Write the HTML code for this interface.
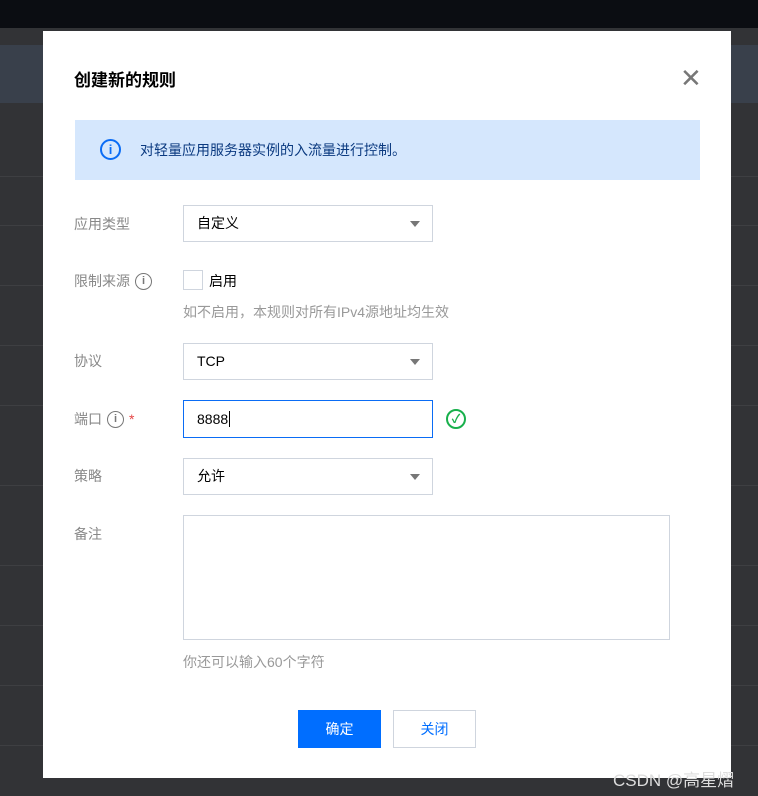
<!DOCTYPE html><html><head><meta charset="utf-8"><style>
*{margin:0;padding:0;box-sizing:border-box}
body{width:758px;height:796px;background:#323336;position:relative;overflow:hidden;font-family:"Liberation Sans","Noto Sans CJK SC",sans-serif;font-size:14px;color:#000}
.top{position:absolute;left:0;top:0;width:758px;height:28px;background:#0b0d12}
.strip{position:absolute;left:0;top:45px;width:758px;height:58px;background:#39404b}
.hl{position:absolute;left:0;width:758px;height:1px;background:#3e3f42}
.m{position:absolute;left:43px;top:31px;width:688px;height:747px;background:#fff}
.a{position:absolute}
.lbl{position:absolute;left:31px;color:#888;font-size:14px;display:flex;align-items:center;height:20px}
.sel{position:absolute;left:140px;width:250px;height:37px;border:1px solid #cfd5de;padding-left:13px;line-height:35px;color:#000}
.sel:after{content:"";position:absolute;right:12px;top:15px;border-left:5px solid transparent;border-right:5px solid transparent;border-top:6px solid #777}
.ic{display:inline-block;width:17px;height:17px;border:1.6px solid #777;border-radius:50%;color:#777;font-size:11px;font-weight:bold;text-align:center;line-height:14px;margin-left:5px}
</style></head><body>
<div class="top"></div><div class="strip"></div>
<div class="hl" style="top:176px"></div><div class="hl" style="top:225px"></div><div class="hl" style="top:285px"></div><div class="hl" style="top:345px"></div><div class="hl" style="top:405px"></div><div class="hl" style="top:485px"></div><div class="hl" style="top:565px"></div><div class="hl" style="top:625px"></div><div class="hl" style="top:685px"></div><div class="hl" style="top:745px"></div>
<div class="m">
<div class="a" style="left:31px;top:35px;font-size:17px;font-weight:bold;color:#000">创建新的规则</div>
<div class="a" style="left:637px;top:34px;font-size:26px;color:#777;line-height:26px">✕</div>
<div class="a" style="left:32px;top:89px;width:625px;height:60px;background:#d5e7fd">
<div class="a" style="left:25px;top:19px;width:21px;height:21px;border:2px solid #0a6cf5;border-radius:50%;color:#0a6cf5;font-weight:bold;font-size:13px;text-align:center;line-height:17px">i</div>
<div class="a" style="left:65px;top:20px;color:#0b3a80;font-size:14px">对轻量应用服务器实例的入流量进行控制。</div></div>
<div class="lbl" style="top:183px">应用类型</div>
<div class="sel" style="top:174px">自定义</div>
<div class="lbl" style="top:240px">限制来源<span class="ic">i</span></div>
<div class="a" style="left:140px;top:239px;width:20px;height:20px;border:1px solid #cfd5de"></div>
<div class="a" style="left:166px;top:240px">启用</div>
<div class="a" style="left:140px;top:271px;color:#999">如不启用，本规则对所有IPv4源地址均生效</div>
<div class="lbl" style="top:320px">协议</div>
<div class="sel" style="top:312px">TCP</div>
<div class="lbl" style="top:378px">端口<span class="ic">i</span><span style="color:#e54545;margin-left:5px">*</span></div>
<div class="a" style="left:140px;top:369px;width:250px;height:38px;border:1px solid #0a6cf5;padding-left:13px;line-height:36px">8888<span style="border-left:1px solid #000;margin-left:1px"></span></div>
<div class="a" style="left:403px;top:378px;width:20px;height:20px;border:2px solid #18b04c;border-radius:50%;color:#18b04c;font-size:12px;font-weight:bold;text-align:center;line-height:16px">✓</div>
<div class="lbl" style="top:435px">策略</div>
<div class="sel" style="top:427px">允许</div>
<div class="lbl" style="top:493px">备注</div>
<div class="a" style="left:140px;top:484px;width:487px;height:125px;border:1px solid #cfd5de"></div>
<div class="a" style="left:140px;top:621px;color:#999">你还可以输入60个字符</div>
<div class="a" style="left:255px;top:679px;width:83px;height:38px;background:#006eff;color:#fff;text-align:center;line-height:38px">确定</div>
<div class="a" style="left:350px;top:679px;width:83px;height:38px;border:1px solid #cfd5de;color:#006eff;text-align:center;line-height:36px">关闭</div>
</div>
<div class="a" style="left:613px;top:766px;color:#ddd;font-size:17px">CSDN @高星熠</div>
</body></html>
